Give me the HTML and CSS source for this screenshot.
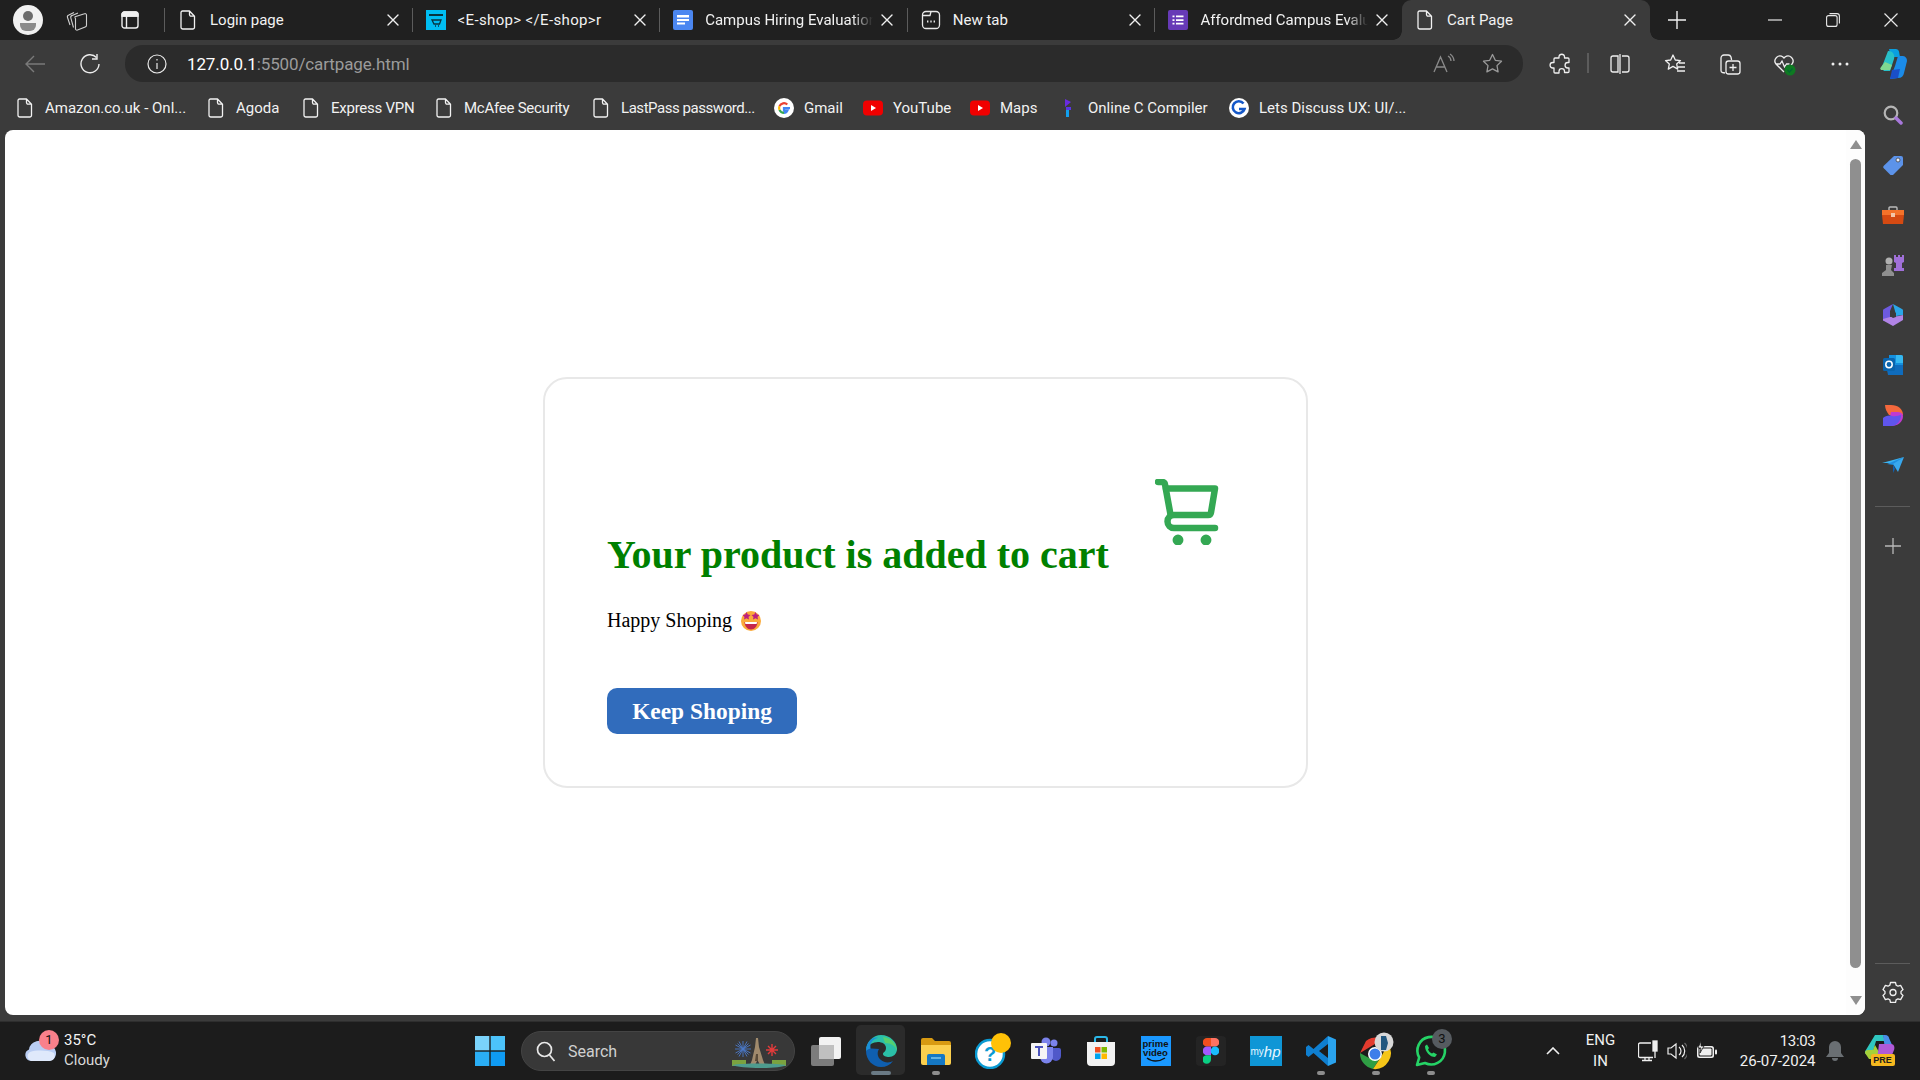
FILE: index.html
```html
<!DOCTYPE html>
<html lang="en">
<head>
<meta charset="utf-8">
<title>Cart Page</title>
<link rel="stylesheet" href="styles.css">
</head>
<body>
<svg class="defs" aria-hidden="true">
  <symbol id="file" viewBox="0 0 16 20"><path d="M2.5 1h7l5 5.2v11a1.8 1.8 0 0 1-1.8 1.8H2.8A1.8 1.8 0 0 1 1 17.2V2.5A1.5 1.5 0 0 1 2.5 1zM9.5 1v3.6a1.6 1.6 0 0 0 1.6 1.6h3.4" fill="none" stroke="#f2f2f2" stroke-width="1.3" stroke-linejoin="round"/></symbol>
  <symbol id="x" viewBox="0 0 14 14"><path d="M2 2l10 10M12 2L2 12" stroke="#f0f0f0" stroke-width="1.4" stroke-linecap="round"/></symbol>
  <symbol id="yt" viewBox="0 0 20 16"><rect width="20" height="15" y=".5" rx="4" fill="#f00000"/><path d="M8 5l5 3-5 3z" fill="#fff"/></symbol>
  <symbol id="g" viewBox="0 0 20 20"><circle cx="10" cy="10" r="10" fill="#fff"/><path d="M16 10.2H10v2.4h3.4a3.7 3.7 0 0 1-3.4 2.3" fill="none" stroke="#4285f4" stroke-width="2.2"/><path d="M10 14.9a4.9 4.9 0 0 1-4.5-3" fill="none" stroke="#34a853" stroke-width="2.2"/><path d="M5.5 11.9a5 5 0 0 1 0-3.8" fill="none" stroke="#fbbc05" stroke-width="2.2"/><path d="M5.5 8.1A4.9 4.9 0 0 1 13.3 6.500" fill="none" stroke="#ea4335" stroke-width="2.2"/></symbol>
</svg>

<header class="tabstrip">
  <div class="tabstart">
    <svg class="avatar" width="30" height="30" viewBox="0 0 30 30"><circle cx="15" cy="15" r="15" fill="#f1f1f1"/><circle cx="15" cy="11" r="5" fill="#6b6b6b"/><path d="M7 18h16v2a6 6 0 0 1-6 6h-4a6 6 0 0 1-6-6z" fill="#8a8a8a"/></svg>
    <svg class="ws" width="22" height="22" viewBox="0 0 22 22" fill="none" stroke="#cfcfcf" stroke-width="1.1" stroke-linejoin="round"><path d="M4 16L1.500 8.500a2 2 0 0 1 1.300-2.500L8 3.500M7.500 18.500L4.800 8.800a2 2 0 0 1 1.400-2.400L12 4"/><path d="M9 7.800L18.500 4.700a1.500 1.500 0 0 1 2 1.400V16.200a2 2 0 0 1-1.300 1.900l-7.700 3A1.500 1.500 0 0 1 9.500 19.700V9.500A2 2 0 0 1 9 7.800z"/></svg>
    <svg class="vt" width="18" height="18" viewBox="0 0 18 18" fill="none" stroke="#f0f0f0" stroke-width="1.4"><rect x="1" y="1" width="16" height="16" rx="2.500"/><path d="M1 5h16M5.500 5v12"/><path d="M1 3.500A2.500 2.500 0 0 1 3.500 1h11A2.500 2.500 0 0 1 17 3.500V5H1z" fill="#f0f0f0"/></svg>
  </div>

  <div class="tab">
    <span class="sep"></span>
    <svg class="ticon" width="16" height="20"><use href="#file"/></svg>
    <span class="ttitle ttitle-file">Login page</span>
    <svg class="tclose" width="14" height="14"><use href="#x"/></svg>
  </div>
  <div class="tab">
    <span class="sep"></span>
    <svg class="ticon ticon-wide" width="20" height="20" viewBox="0 0 20 20"><rect width="20" height="20" fill="#00bdf2"/><rect x="3" y="4" width="14" height="2" fill="#07343f"/><path d="M6 10h9l-1.500 4H8zM9 16h1M12 16h1" fill="none" stroke="#07343f" stroke-width="1.300"/></svg>
    <span class="ttitle ttitle-shop">&lt;E-shop&gt; &lt;/E-shop&gt;r</span>
    <svg class="tclose" width="14" height="14"><use href="#x"/></svg>
  </div>
  <div class="tab">
    <span class="sep"></span>
    <svg class="ticon ticon-wide" width="20" height="20" viewBox="0 0 20 20"><rect width="20" height="20" rx="2" fill="#4b87f1"/><path d="M4 5h12v2.500H4zM4 9h12v2H4zM4 12.500h8v2H4z" fill="#fff"/></svg>
    <span class="ttitle fade">Campus Hiring Evaluation</span>
    <svg class="tclose" width="14" height="14"><use href="#x"/></svg>
  </div>
  <div class="tab">
    <span class="sep"></span>
    <svg class="ticon ticon-wide" width="20" height="20" viewBox="0 0 20 20" fill="none" stroke="#e8e8e8" stroke-width="1.300"><rect x="1.500" y="1.500" width="17" height="17" rx="3.500"/><path d="M1.500 5.500h7.500l1-4"/><path d="M6 11.500h1.400M9.300 11.500h1.400M12.600 11.500H14" stroke-width="1.800"/></svg>
    <span class="ttitle">New tab</span>
    <svg class="tclose" width="14" height="14"><use href="#x"/></svg>
  </div>
  <div class="tab">
    <span class="sep"></span>
    <svg class="ticon ticon-wide" width="20" height="20" viewBox="0 0 20 20"><rect width="20" height="20" rx="2" fill="#673ab7"/><path d="M8 5.500h7.500v1.700H8zM8 9.200h7.500v1.700H8zM8 12.800h7.500v1.700H8z" fill="#fff"/><path d="M4.500 5.500h2v1.700h-2zM4.500 9.200h2v1.700h-2zM4.500 12.800h2v1.700h-2z" fill="#fff"/></svg>
    <span class="ttitle fade">Affordmed Campus Evalu</span>
    <svg class="tclose" width="14" height="14"><use href="#x"/></svg>
  </div>
  <div class="tab tab-active">
    <svg class="ticon ticon-active" width="16" height="20"><use href="#file"/></svg>
    <span class="ttitle">Cart Page</span>
    <svg class="tclose" width="14" height="14"><use href="#x"/></svg>
  </div>

  <div class="newtab"><svg width="18" height="18" viewBox="0 0 18 18"><path d="M9 0v18M0 9h18" stroke="#f0f0f0" stroke-width="1.400"/></svg></div>

  <div class="winctl">
    <div class="wbtn"><svg width="14" height="14" viewBox="0 0 14 14"><path d="M0 7h14" stroke="#e8e8e8" stroke-width="1.200"/></svg></div>
    <div class="wbtn"><svg width="14" height="14" viewBox="0 0 14 14" fill="none" stroke="#e8e8e8" stroke-width="1.100"><rect x=".6" y="2.600" width="10.500" height="10.800" rx="2"/><path d="M3.500.6h7.500a2.400 2.400 0 0 1 2.400 2.400v7.500"/></svg></div>
    <div class="wbtn"><svg width="14" height="14" viewBox="0 0 14 14"><path d="M.5.500l13 13M13.500.500l-13 13" stroke="#e8e8e8" stroke-width="1.200"/></svg></div>
  </div>
</header>

<nav class="toolbar">
  <div class="tbtn"><svg width="20" height="18" viewBox="0 0 20 18" fill="none" stroke="#7a7a7a" stroke-width="1.400"><path d="M20 9H1M9 1L1 9l8 8"/></svg></div>
  <div class="tbtn"><svg width="20" height="20" viewBox="0 0 20 20" fill="none" stroke="#ededed" stroke-width="1.400"><path d="M16.500 3.500A9 9 0 1 0 19 10"/><path d="M17 0v5h-5"/></svg></div>
  <div class="addr">
    <svg class="addr-info" width="20" height="20" viewBox="0 0 20 20" fill="none" stroke="#eaeaea" stroke-width="1.200"><circle cx="10" cy="10" r="9"/><path d="M10 9v6M10 5v1.600"/></svg>
    <span class="url"><span class="url-host">127.0.0.1</span>:5500/cartpage.html</span>
    <svg class="addr-read" width="22" height="22" viewBox="0 0 22 22" fill="none" stroke="#8a8a8a" stroke-width="1.300"><path d="M1 19L7.500 4 14 19M3.500 14h8M15 3a6 6 0 0 1 3 5M17 1a9 9 0 0 1 4 7"/></svg>
    <svg class="addr-star" width="21" height="21" viewBox="0 0 21 21" fill="none" stroke="#9a9a9a" stroke-width="1.300"><path d="M10.500 1.500l2.800 5.800 6.200.9-4.500 4.400 1.100 6.300-5.600-3-5.600 3 1.100-6.300L1.500 8.200l6.200-.9z" stroke-linejoin="round"/></svg>
  </div>
  <div class="tbtn tbtn-first"><svg width="22" height="22" viewBox="-2 0 22 22" fill="none" stroke="#efefef" stroke-width="1.300" stroke-linejoin="round"><path d="M8 3.500a2.800 2.800 0 0 1 5.500 0V5H17a1 1 0 0 1 1 1v3.500h-1.200a2.700 2.700 0 0 0 0 5.500H18v3.500a1 1 0 0 1-1 1h-3.500v-1.200a2.700 2.700 0 0 0-5.500 0V20H4a1 1 0 0 1-1-1v-4H1.800a2.700 2.700 0 0 1 0-5.500H3V6a1 1 0 0 1 1-1h4z"/></svg></div>
  <span class="tsep"></span>
  <div class="tbtn"><svg width="20" height="20" viewBox="0 0 20 20" fill="none" stroke="#efefef" stroke-width="1.300"><path d="M8 2H3a2 2 0 0 0-2 2v12a2 2 0 0 0 2 2h5zM12 2h5a2 2 0 0 1 2 2v12a2 2 0 0 1-2 2h-5M10 0v20"/></svg></div>
  <div class="tbtn"><svg width="22" height="22" viewBox="0 0 22 22" fill="none" stroke="#efefef" stroke-width="1.300" stroke-linejoin="round"><path d="M9 2l2.300 5 5.200.6-3.800 3.500 1 5-4.700-2.700-4.700 2.700 1-5-3.800-3.500L6.700 7zM15 10h6M14 14h7M13 18h8"/></svg></div>
  <div class="tbtn"><svg width="22" height="22" viewBox="0 0 22 22" fill="none" stroke="#efefef" stroke-width="1.300"><path d="M6 20l-2.500-.500a2 2 0 0 1-1.500-2V5a3 3 0 0 1 3-3h4a3 3 0 0 1 3 2l.6 3"/><rect x="7" y="8" width="14" height="13" rx="2.500"/><path d="M14 11v7M10.500 14.500h7"/></svg></div>
  <div class="tbtn"><svg width="24" height="24" viewBox="0 0 24 24"><path d="M11 20L3 12a5 5 0 0 1 7-7l1 1 1-1a5 5 0 0 1 7 7l-1 1M3 12h4l2-3 2.500 6 2-3h3" fill="none" stroke="#efefef" stroke-width="1.300"/><circle cx="17" cy="18" r="5.500" fill="#0e7a22"/><path d="M14.500 18l2 2 3-3.500" fill="none" stroke="#063" stroke-width="1.200"/></svg></div>
  <div class="tbtn"><svg width="18" height="4" viewBox="0 0 18 4" fill="#efefef"><circle cx="2" cy="2" r="1.500"/><circle cx="9" cy="2" r="1.500"/><circle cx="16" cy="2" r="1.500"/></svg></div>
  <div class="tbtn tbtn-cop"><svg width="30" height="32" viewBox="0 0 30 32"><path d="M11 1h7a3 3 0 0 1 3 2.500L22 9H13z" fill="#0a9fe0"/><path d="M10 3l-5 13a5 5 0 0 0 1 7h6l4-12c1-3 0-8-6-8z" fill="#28c0c8"/><path d="M3 22h9l2-5-7-3-4 5a2 2 0 0 0 0 3z" fill="#80d890"/><path d="M20 8h5a5 5 0 0 1 4 5l-3 12a6 6 0 0 1-6 5l-8 1 5-13z" fill="#1b8be8"/><path d="M14 22l8-1-2 9-8 1z" fill="#1a4fc8"/></svg></div>
</nav>

<div class="body">
  <div class="main">
    <div class="bookmarks">
      <div class="bm"><svg width="16" height="20"><use href="#file"/></svg><span>Amazon.co.uk - Onl...</span></div>
      <div class="bm"><svg width="16" height="20"><use href="#file"/></svg><span>Agoda</span></div>
      <div class="bm bm-snug"><svg width="16" height="20"><use href="#file"/></svg><span>Express VPN</span></div>
      <div class="bm bm-snug"><svg width="16" height="20"><use href="#file"/></svg><span>McAfee Security</span></div>
      <div class="bm bm-tight"><svg width="16" height="20"><use href="#file"/></svg><span>LastPass password...</span></div>
      <div class="bm bm-g"><svg width="20" height="20"><use href="#g"/></svg><span>Gmail</span></div>
      <div class="bm bm-g"><svg width="20" height="16"><use href="#yt"/></svg><span>YouTube</span></div>
      <div class="bm bm-g"><svg width="20" height="16"><use href="#yt"/></svg><span>Maps</span></div>
      <div class="bm bm-g"><svg width="20" height="20" viewBox="0 0 20 20"><path d="M7 1l6 3-6 5z" fill="#6a2be0"/><path d="M8 9h5v3H8z" fill="#5a35e8"/><path d="M8 12h3v7H8z" fill="#12a0ee"/></svg><span>Online C Compiler</span></div>
      <div class="bm bm-g"><svg width="20" height="20" viewBox="0 0 20 20"><circle cx="10" cy="10" r="10" fill="#fff"/><path d="M14.500 5.500A6 6 0 1 0 15.500 11H10" fill="none" stroke="#1558c8" stroke-width="2.600"/></svg><span>Lets Discuss UX: UI/...</span></div>
    </div>

    <main class="page">
      <div class="content">
        <section class="card">
          <div class="card-head">
            <h1 class="card-title">Your product is added to cart</h1>
            <svg class="cart" width="64" height="66" viewBox="0 0 64 66" fill="none" stroke="#34a853" stroke-width="6.500" stroke-linecap="round" stroke-linejoin="round"><path d="M3 3h4a3 3 0 0 1 3 2.500l5.500 30"/><path d="M11 9.500h49l-4 24a3 3 0 0 1-3 2.500H19a6.500 6.500 0 0 0 0 13h41"/><circle cx="23" cy="61" r="2.200" fill="#34a853"/><circle cx="51" cy="61" r="2.200" fill="#34a853"/></svg>
          </div>
          <p class="card-text">Happy Shoping <svg class="emoji" width="20" height="20" viewBox="0 0 20 20"><circle cx="10" cy="10" r="10" fill="#fbab3a"/><path d="M5.500 1l1.300 2.500 2.700.4-2 2 .5 2.700L5.500 7.300 3 8.600l.5-2.700-2-2 2.700-.4zM14.500 1l1.300 2.500 2.700.4-2 2 .5 2.700-2.500-1.300-2.500 1.300.5-2.700-2-2 2.700-.4z" fill="#bc1f7f"/><path d="M3.500 11h13c0 4-3 7.500-6.500 7.500S3.500 15 3.500 11z" fill="#c5264b"/><path d="M4 11h12l-.4 2H4.400z" fill="#fff"/></svg></p>
          <button class="keep" type="button">Keep Shoping</button>
        </section>
      </div>
      <div class="scrollbar">
        <span class="sb-up"></span>
        <span class="sb-thumb"></span>
        <span class="sb-down"></span>
      </div>
    </main>
  </div>

  <aside class="sidebar">
    <div class="sicon"><svg width="20" height="21" viewBox="0 0 20 21"><circle cx="8" cy="8" r="6.300" fill="none" stroke="#b5b5b5" stroke-width="2.200"/><path d="M13 13l5 5" stroke="#a878dc" stroke-width="3.500" stroke-linecap="round"/></svg></div>
    <div class="sicon"><svg width="20" height="20" viewBox="0 0 20 20"><path d="M11 1h7a2 2 0 0 1 2 2v7L10 20a1.800 1.800 0 0 1-2.500 0L.8 13.300a1.800 1.800 0 0 1 0-2.500z" fill="#5c93ea"/><circle cx="15" cy="5" r="2" fill="#e8eefc" stroke="#444" stroke-width=".800"/></svg></div>
    <div class="sicon"><svg width="22" height="18" viewBox="0 0 22 18"><path d="M7 4V2a1 1 0 0 1 1-1h6a1 1 0 0 1 1 1v2" fill="none" stroke="#bbb" stroke-width="1.400"/><path d="M0 4h22v5H0z" fill="#f4722a"/><path d="M0 9h22l-1 9H1z" fill="#d54a12"/><rect x="9" y="7" width="4" height="4" fill="#f3c6a8"/></svg></div>
    <div class="sicon"><svg width="22" height="22" viewBox="0 0 22 22"><path d="M12 1h2v2h2V1h2v2h2V1h2v7l-2 1v5h2v3H12v-3h2V9l-2-1z" fill="#a070d8"/><circle cx="7" cy="7" r="3.500" fill="#b0b0b0"/><path d="M4 11h6l-1 5 3 3v3H0v-3l4-3z" fill="#8f8f8f"/></svg></div>
    <div class="sicon"><svg width="20" height="22" viewBox="0 0 20 22"><path d="M10 0l9 5a2 2 0 0 1 1 2v4l-7 1-1-5z" fill="#2aa6e8"/><path d="M0 7a2 2 0 0 1 1-2l9-5-3 7v8l-7 2z" fill="#6d5ae0"/><path d="M0 15l7-2 9-1 4-1v5l-10 6-9-5a2 2 0 0 1-1-2z" fill="#b184e6"/><path d="M7 8l3-1 3 2v4l-3 1-3-2z" fill="#3b3b3b"/></svg></div>
    <div class="sicon"><svg width="20" height="20" viewBox="0 0 20 20"><path d="M6 0h12a2 2 0 0 1 2 2v16a2 2 0 0 1-2 2H6z" fill="#1490df"/><path d="M13 0h5a2 2 0 0 1 2 2v6h-7z" fill="#35b8f1"/><path d="M3 10h17v10H5z" fill="#0f6cbd"/><rect y="3" width="12" height="13" rx="1.500" fill="#0a64ad"/><circle cx="6" cy="9.500" r="3.200" fill="none" stroke="#fff" stroke-width="1.500"/></svg></div>
    <div class="sicon"><svg width="20" height="21" viewBox="0 0 20 21"><path d="M2 0h6c7 0 12 4 12 10H6C4 7 2 4 2 0z" fill="#f4683c"/><path d="M8 7h6c3 0 6 1 6 4 0 6-5 10-12 10H0c4-2 6-4 8-14z" fill="#c03ad0"/><path d="M0 21V13c2-2 6-3 9-2 4 1 7-1 9-1 0 6-4 11-10 11z" fill="#5f55ec"/></svg></div>
    <div class="sicon"><svg width="22" height="16" viewBox="0 0 22 16"><path d="M0 6L22 0 11 6z" fill="#3bb4f2"/><path d="M5 7L22 0 12 8z" fill="#1f8fe0"/><path d="M11 7L22 0l-6 15z" fill="#38a8ee"/><path d="M11 7v9l2-4z" fill="#0f5fb0"/></svg></div>
    <span class="sdiv sdiv-top"></span>
    <div class="sicon sicon-plus"><svg width="16" height="16" viewBox="0 0 16 16"><path d="M8 0v16M0 8h16" stroke="#b8b8b8" stroke-width="1.300"/></svg></div>
    <span class="sdiv sdiv-bottom"></span>
    <div class="sicon sicon-gear"><svg width="22" height="22" viewBox="0 0 22 22" fill="none" stroke="#efefef" stroke-width="1.300" stroke-linejoin="round"><path d="M8.500 1.500h5l.6 2.600 1.900 1.100 2.600-.8 2.400 4.200-2 1.800v2.200l2 1.800-2.400 4.200-2.600-.8-1.900 1.100-.6 2.600h-5l-.6-2.600L6 17.800l-2.600.8L1 14.400 3 12.600v-2.200L1 8.600l2.400-4.200 2.600.8 1.900-1.100z"/><circle cx="11" cy="11.500" r="3"/></svg></div>
  </aside>
</div>

<footer class="taskbar">
  <div class="weather">
    <div class="wicon">
      <svg width="32" height="24" viewBox="0 0 32 24"><path d="M7 23a6 6 0 0 1-2-11.500A10 10 0 0 1 23 7a7 7 0 0 1 2 16z" fill="#b9cdf3"/><path d="M7 23a5 5 0 0 1-1-9c6-2 18-2 24 1 2 4 0 8-5 8z" fill="#dfe9fb"/></svg>
      <span class="wbadge">1</span>
    </div>
    <div class="wtext"><span class="wtemp">35°C</span><span>Cloudy</span></div>
  </div>

  <div class="cell"><svg width="30" height="30" viewBox="0 0 30 30"><rect width="14.300" height="14.300" fill="#7ad3fb"/><rect x="15.700" width="14.300" height="14.300" fill="#4cc3fa"/><rect y="15.700" width="14.300" height="14.300" fill="#2aaef5"/><rect x="15.700" y="15.700" width="14.300" height="14.300" fill="#0f9bf3"/></svg></div>

  <div class="search">
    <svg width="20" height="21" viewBox="0 0 20 21" fill="none" stroke="#e8e8e8" stroke-width="1.700"><circle cx="8.500" cy="8.500" r="7"/><path d="M13.500 14l5 6"/></svg>
    <span class="search-label">Search</span>
    <svg class="search-art" width="54" height="32" viewBox="0 0 54 32"><path d="M11 3v16M3 11h16M5.500 5.500l11 11M16.500 5.500l-11 11M7 3.500l8 15M15 3.500l-8 15M3.500 7l15 8M18.500 7l-15 8" stroke="#4a78c8" stroke-width=".9"/><path d="M40 6v12M34 12h12M36 8l8 8M44 8l-8 8" stroke="#e23b3b" stroke-width="1.400"/><path d="M24 0h2l1 9 4 13 2 5h-5l-2-4h-1l-2 4h-5l2-5 3-13z" fill="#a08a6c"/><path d="M23 23h3v-7h-2z" fill="#5a4b38"/><path d="M0 22h14v6H0zM40 22h14v6H40z" fill="#7ba23f"/><path d="M0 27c10-2 44-2 54 0-4 4-46 4-54 0z" fill="#4e9c8e"/></svg>
  </div>

  <div class="cell"><svg width="30" height="30" viewBox="0 0 30 30"><rect x="8" y="1" width="22" height="22" rx="2" fill="#f2f2f2"/><rect y="9" width="23" height="21" rx="2" fill="#8d8d8d" opacity=".85"/><rect x="8" y="9" width="15" height="14" fill="#c0c0c0"/></svg></div>
  <div class="cell cell-active"><svg width="32" height="32" viewBox="0 0 32 32"><path d="M1 16C1 7 8 0 16 0c9 0 16 7 16 14 0 5-4 8-8 8-3 0-6-1-6-3 0-2 3-2 3-6 0-4-4-6-8-6S1 10 1 16z" fill="#2bc0a8"/><path d="M1 16C1 7 8 1 13 3 7 4 4 9 6 15z" fill="#1a8fd8"/><path d="M1 16c0 9 7 16 15 16 5 0 9-2 12-6-3 2-9 2-12-1-4-3-4-8-2-11-5 0-9-2-13 2z" fill="#0f5fb0"/><path d="M20 8c6 0 11 3 12 8 0-4-3-13-14-14z" fill="#55d070"/></svg><span class="ind ind-active"></span></div>
  <div class="cell"><svg width="30" height="28" viewBox="0 0 30 28"><path d="M0 3a2 2 0 0 1 2-2h9l3 3h14a2 2 0 0 1 2 2v3H0z" fill="#d89a12"/><path d="M0 8h30v18a2 2 0 0 1-2 2H2a2 2 0 0 1-2-2z" fill="#fbcf4e"/><path d="M6 19a2 2 0 0 1 2-2h14a2 2 0 0 1 2 2v9H6z" fill="#1578c4"/><path d="M10 21h10" stroke="#7cc6ef" stroke-width="1.500"/></svg><span class="ind"></span></div>
  <div class="cell cell-help"><svg width="36" height="36" viewBox="0 0 36 36"><circle cx="15" cy="21" r="14" fill="#fff" stroke="#0a9ad2" stroke-width="2.500"/><text x="15" y="28" class="help-mark">?</text><ellipse cx="26" cy="10" rx="10" ry="10" fill="#ffc107"/></svg></div>
  <div class="cell"><svg width="30" height="28" viewBox="0 0 30 28"><circle cx="23" cy="6" r="3.500" fill="#7b83eb"/><circle cx="15" cy="5" r="4.500" fill="#7b83eb"/><path d="M18 11h10a2 2 0 0 1 2 2v6a5 5 0 0 1-10 0z" fill="#5059c9"/><path d="M9 10h13v10a6.500 6.500 0 0 1-13 0z" fill="#7b83eb"/><rect y="6" width="16" height="16" rx="1" fill="#f5f5f5"/><path d="M4 10h8M8 10v9" stroke="#4b53bc" stroke-width="2"/></svg></div>
  <div class="cell"><svg width="30" height="30" viewBox="0 0 30 30"><path d="M9 6V3a2 2 0 0 1 2-2h8a2 2 0 0 1 2 2v3" fill="none" stroke="#2bb8e8" stroke-width="2"/><path d="M1 6h28v20a4 4 0 0 1-4 4H5a4 4 0 0 1-4-4z" fill="#f2f2f2"/><rect x="9" y="11" width="5.500" height="5.500" fill="#f25022"/><rect x="15.500" y="11" width="5.500" height="5.500" fill="#7fba00"/><rect x="9" y="17.500" width="5.500" height="5.500" fill="#00a4ef"/><rect x="15.500" y="17.500" width="5.500" height="5.500" fill="#ffb900"/></svg></div>
  <div class="cell"><div class="prime"><span>prime</span><span>video</span><svg width="20" height="6" viewBox="0 0 20 6"><path d="M1 1c5 4 12 4 18 0" fill="none" stroke="#111" stroke-width="1.400"/></svg></div></div>
  <div class="cell"><div class="figma"><svg width="16" height="26" viewBox="0 0 16 26"><path d="M4 0h4v8.600H4a4.300 4.300 0 0 1 0-8.600z" fill="#f24e1e"/><path d="M8 0h4a4.300 4.300 0 0 1 0 8.600H8z" fill="#ff7262"/><path d="M4 8.600h4v8.600H4a4.300 4.300 0 0 1 0-8.600z" fill="#a259ff"/><circle cx="12" cy="12.900" r="4.300" fill="#1abcfe"/><path d="M4 17.200h4v4.300a4.300 4.300 0 1 1-4-4.300z" fill="#0acf83"/></svg></div></div>
  <div class="cell"><div class="myhp"><span class="my">my</span><span class="hp">hp</span></div></div>
  <div class="cell"><svg width="30" height="30" viewBox="0 0 30 30"><path d="M22 0L7.500 13l-5-4L0 11v8l2.500 2 5-4L22 30v-8l-9-7 9-7z" fill="#0f7fd0"/><path d="M22 0l8 3.500v23L22 30z" fill="#2aa3ee"/></svg><span class="ind"></span></div>
  <div class="cell cell-chrome"><svg width="38" height="38" viewBox="0 0 38 38"><path d="M3 21L9 9a15 15 0 0 1 22 3H18z" fill="#e33b2e"/><path d="M3 21a16 16 0 0 0 13 16l7-11H12z" fill="#2f9e44"/><path d="M31 12a16 16 0 0 1-15 25l8-12z" fill="#f5c518"/><circle cx="18" cy="22" r="7" fill="#fff"/><circle cx="18" cy="22" r="5.500" fill="#3d7eea"/><circle cx="27" cy="10" r="9.500" fill="#d8d8d8"/><path d="M24 4h5l2 7-2 7h-5z" fill="#21577f"/></svg><span class="ind"></span></div>
  <div class="cell cell-wa"><svg width="34" height="34" viewBox="0 0 34 34"><path d="M3 31l2.200-7.500A13.800 13.800 0 1 1 11 29z" fill="none" stroke="#25d366" stroke-width="2.600" stroke-linejoin="round"/><path d="M11 12c0 6 5 11 10 11l2-2.500-3.500-2-1.500 1c-2-.8-3-2-4-4l1-1.500-2-3.500z" fill="#25d366"/></svg><span class="wa-badge">3</span><span class="ind"></span></div>

  <div class="tray">
    <svg class="chev" width="14" height="8" viewBox="0 0 14 8"><path d="M1 7l6-6 6 6" fill="none" stroke="#f0f0f0" stroke-width="1.600"/></svg>
    <div class="lang"><span>ENG</span><span>IN</span></div>
    <svg class="net" width="20" height="22" viewBox="0 0 20 22" fill="none" stroke="#efefef" stroke-width="1.300"><path d="M13 3H2a1.500 1.500 0 0 0-1.500 1.500V16A1.500 1.500 0 0 0 2 17.500h13M7 17.500v3M11 17.500v3M4 20.500h10"/><rect x="15" y="1" width="4" height="10" fill="#efefef"/><path d="M17 11v7"/></svg>
    <svg class="vol" width="20" height="18" viewBox="0 0 20 18" fill="none" stroke="#efefef" stroke-width="1.200"><path d="M1 6h3l5-4v14l-5-4H1zM12 5a5 5 0 0 1 0 8M15 3a8 8 0 0 1 0 12"/><path d="M17.500 1a11 11 0 0 1 0 16" stroke="#666"/></svg>
    <svg class="bat" width="22" height="20" viewBox="0 0 22 20"><rect x="1" y="5" width="17" height="12" rx="2.500" fill="#efefef"/><rect x="19" y="8.500" width="2" height="5" rx="1" fill="#efefef"/><rect x="2.500" y="6.500" width="14" height="9" rx="1.500" fill="#1c1c1c"/><rect x="3.500" y="7.500" width="12" height="7" rx="1" fill="#efefef"/><path d="M5 0L2 7h3l-1 5 4-7H5z" fill="#efefef" stroke="#1c1c1c" stroke-width=".800"/></svg>
    <div class="clock"><span class="clock-time">13:03</span><span>26-07-2024</span></div>
    <svg class="bell" width="18" height="20" viewBox="0 0 18 20" fill="#6a6f73"><path d="M9 0a6 6 0 0 1 6 6v6l3 4H0l3-4V6a6 6 0 0 1 6-6z"/><path d="M6 17h6a3 3 0 0 1-6 0z"/></svg>
    <div class="copilot">
      <svg width="30" height="26" viewBox="0 0 30 26"><path d="M10 0h8l2 6H11L7 20H3a3 3 0 0 1-3-3.500z" fill="#2fc7c0"/><path d="M0 18a3 3 0 0 1 3-3h5l2-5 4 7-2 7H4z" fill="#a5d038"/><path d="M18 0h2c3 0 4 2 4 3l4 9-8 2z" fill="#4a8ee8"/><path d="M14 9h12c3 0 4 3 3 6l-2 5a6 6 0 0 1-6 5H12z" fill="#b05ad8"/></svg>
      <span class="pre">PRE</span>
    </div>
  </div>
</footer>
</body>
</html>
```

FILE: styles.css
```css
* { box-sizing: border-box; }
html, body { margin: 0; height: 100%; }
body {
  width: 1920px;
  height: 1080px;
  overflow: hidden;
  background: #3b3b3b;
  color: #f2f2f2;
  font-family: Roboto, "Noto Sans", sans-serif;
  font-size: 15px;
  display: flex;
  flex-direction: column;
}
svg { display: block; flex: none; }
.defs { width: 0; height: 0; }

/* Tab strip */
.tabstrip { height: 40px; background: #202020; display: flex; align-items: stretch; flex: none; }
.tabstart { width: 164px; display: flex; align-items: center; padding-left: 13px; flex: none; }
.ws { margin-left: 23px; }
.vt { margin-left: 33px; }
.tab { width: 247.6px; display: flex; align-items: center; position: relative; flex: none; }
.sep { width: 1px; height: 24px; background: #5c5c5c; margin-right: 14px; flex: none; }
.ticon { margin-left: 1px; margin-right: 14px; }
.ticon-wide { margin-left: -1px; margin-right: 12px; }
.ttitle { width: 175px; white-space: nowrap; overflow: hidden; flex: none; }
.ttitle-file { width: 176px; }
.ttitle-shop { letter-spacing: 0.35px; }
.fade { -webkit-mask-image: linear-gradient(90deg, #000 84%, transparent 96%); mask-image: linear-gradient(90deg, #000 84%, transparent 96%); }
.tab-active { background: #3b3b3b; border-radius: 9px 9px 0 0; }
.tab-active::before, .tab-active::after {
  content: "";
  position: absolute;
  bottom: 0;
  width: 9px;
  height: 9px;
}
.tab-active::before { left: -9px; background: radial-gradient(circle at 0 0, #202020 8.5px, #3b3b3b 9px); }
.tab-active::after { right: -9px; background: radial-gradient(circle at 100% 0, #202020 8.5px, #3b3b3b 9px); }
.ticon-active { margin-left: 15px; margin-right: 14px; }
.tab-active .ttitle { width: 176px; }
.newtab { width: 44px; margin-left: 5px; display: flex; align-items: center; justify-content: center; }
.winctl { margin-left: auto; display: flex; }
.wbtn { width: 58px; display: flex; align-items: center; justify-content: center; }

/* Toolbar */
.toolbar { height: 42px; display: flex; align-items: flex-end; padding-left: 7px; flex: none; }
.tbtn { width: 55px; height: 37px; display: flex; align-items: center; justify-content: center; flex: none; }
.tbtn-first { margin-left: 9px; }
.tbtn-cop { width: 52px; }
.tsep { width: 2px; height: 20px; background: #5c5c5c; margin: 0 3px 9px 0; flex: none; }
.addr {
  width: 1398px;
  height: 37px;
  margin-left: 8px;
  background: #2b2b2b;
  border-radius: 18px;
  display: flex;
  align-items: center;
  padding-left: 22px;
  flex: none;
}
.url { margin-left: 20px; font-size: 17px; color: #9b9b9b; letter-spacing: -0.12px; }
.url-host { color: #fff; }
.addr-read { margin-left: auto; }
.addr-star { margin-left: 27px; margin-right: 20px; }

/* Body */
.body { flex: 1; display: flex; min-height: 0; }
.main { flex: 1; display: flex; flex-direction: column; min-width: 0; padding-bottom: 6px; }
.bookmarks {
  height: 48px;
  display: grid;
  grid-template-columns: 191px 95px 133px 157px 181px 89px 107px 88px 171px auto;
  justify-content: start;
  align-items: center;
  padding: 4px 0 0 17px;
  flex: none;
}
.bm { display: flex; align-items: center; gap: 12px; white-space: nowrap; font-size: 15px; }
.bm-g { gap: 10px; }
.bm-snug { letter-spacing: -0.25px; }
.bm-tight { letter-spacing: -0.45px; }

/* Page */
.page {
  flex: 1;
  margin-left: 5px;
  background: #fff;
  border-radius: 8px;
  display: flex;
  overflow: hidden;
  color: #000;
  font-family: "Liberation Serif", "Times New Roman", serif;
}
.content { flex: 1; display: flex; justify-content: center; align-items: flex-start; padding-top: 247px; }
.card {
  width: 765px;
  height: 411px;
  border: 2px solid #e8e8e8;
  border-radius: 24px;
  padding: 100px 62px 0;
  display: flex;
  flex-direction: column;
  align-items: flex-start;
}
.card-head { display: flex; align-items: flex-start; gap: 46.5px; }
.card-title { margin: 53px 0 0; font-size: 40px; line-height: 46px; font-weight: 700; color: #008000; white-space: nowrap; }
.cart { margin-top: 0; }
.card-text { margin: 31px 0 0; font-size: 20px; line-height: 23px; display: flex; align-items: center; gap: 9px; }
.keep {
  margin-top: 56px;
  width: 190px;
  height: 46px;
  border: 0;
  border-radius: 10px;
  background: #316cbc;
  color: #fff;
  font-family: inherit;
  font-size: 23.4px;
  font-weight: 700;
}
.scrollbar { width: 19px; background: #fdfdfd; display: flex; flex-direction: column; align-items: center; padding: 10px 0; flex: none; }
.sb-up { width: 0; height: 0; border-left: 6.5px solid transparent; border-right: 6.5px solid transparent; border-bottom: 9px solid #8f8f8f; }
.sb-thumb { width: 11px; flex: 1; background: #8f8f8f; border-radius: 6px; margin: 10px 0 28px; }
.sb-down { width: 0; height: 0; border-left: 6.5px solid transparent; border-right: 6.5px solid transparent; border-top: 9px solid #8f8f8f; }

/* Sidebar */
.sidebar { width: 55px; flex: none; display: flex; flex-direction: column; align-items: center; padding-top: 8px; }
.sicon { height: 50px; width: 100%; display: flex; align-items: center; justify-content: center; flex: none; }
.sdiv { width: 35px; height: 1px; background: #5c5c5c; flex: none; }
.sdiv-top { margin-top: 16px; }
.sicon-plus { margin-top: 14px; }
.sdiv-bottom { margin-top: auto; }
.sicon-gear { margin-top: 3px; margin-bottom: 4px; }

/* Taskbar */
.taskbar {
  height: 59px;
  flex: none;
  background: #1c1c1c;
  border-top: 1px solid #2e2e2e;
  display: flex;
  align-items: center;
}
.weather { width: 462px; display: flex; align-items: center; padding-left: 24px; flex: none; }
.wicon { position: relative; width: 32px; height: 24px; margin-top: -2px; }
.wbadge {
  position: absolute;
  left: 15px;
  top: -8px;
  width: 20px;
  height: 20px;
  border-radius: 50%;
  background: #f9808b;
  color: #111;
  font-size: 13px;
  line-height: 20px;
  text-align: center;
}
.wtext { display: flex; flex-direction: column; margin-left: 8px; font-size: 15px; line-height: 20px; color: #d8d8d8; margin-top: -3px; }
.wtemp { color: #f4f4f4; }
.cell { width: 55px; height: 58px; display: flex; align-items: center; justify-content: center; position: relative; flex: none; }
.cell-active::before {
  content: "";
  position: absolute;
  left: 3px;
  right: 3px;
  top: 3px;
  bottom: 5px;
  border-radius: 5px;
  background: #2b2b2b;
}
.cell-active svg { position: relative; }
.cell-help svg { margin-left: 4px; }
.ind { position: absolute; left: 50%; bottom: 5px; width: 8px; height: 4px; margin-left: -4px; border-radius: 2px; background: #8d8d8d; }
.ind-active { width: 20px; margin-left: -10px; background: #6a7a85; }
.search {
  width: 274px;
  height: 40px;
  margin: 0 3px 0 4px;
  border-radius: 20px;
  background: #383838;
  border: 1px solid #444;
  display: flex;
  align-items: center;
  padding-left: 14px;
  flex: none;
}
.search-label { margin-left: 12px; font-size: 16px; color: #d0d0d0; }
.search-art { margin-left: auto; margin-right: 8px; margin-top: 6px; }
.help-mark { font-family: "Liberation Sans", sans-serif; font-size: 20px; font-weight: 700; fill: #0a9ad2; text-anchor: middle; }
.prime {
  width: 30px;
  height: 30px;
  background: #1a98ff;
  color: #111;
  font-family: "Liberation Sans", sans-serif;
  font-size: 9.5px;
  font-weight: 700;
  line-height: 9px;
  display: flex;
  flex-direction: column;
  align-items: center;
  padding-top: 3px;
}
.figma { width: 30px; height: 30px; background: #242424; border-radius: 4px; display: flex; align-items: center; justify-content: center; }
.myhp { width: 32px; height: 30px; background: #0f96d6; color: #e8f6ff; font-family: "Liberation Sans", sans-serif; font-style: italic; display: flex; align-items: center; justify-content: center; }
.my { font-size: 10px; font-style: normal; }
.hp { font-size: 15px; }
.wa-badge {
  position: absolute;
  left: 29px;
  top: 7px;
  width: 20px;
  height: 20px;
  border-radius: 50%;
  background: #565b60;
  color: #111;
  font-size: 13px;
  line-height: 20px;
  text-align: center;
}
.tray { display: flex; align-items: center; flex: none; }
.chev { margin-left: 87.5px; margin-right: 8px; }
.lang { width: 40px; margin-left: 13px; display: flex; flex-direction: column; align-items: center; font-size: 15px; line-height: 21px; color: #f0f0f0; }
.net { margin-left: 17px; }
.vol { margin-left: 9px; }
.bat { margin-left: 9px; }
.clock { width: 90px; margin-left: 8px; display: flex; flex-direction: column; align-items: flex-end; font-size: 15px; line-height: 20px; color: #f0f0f0; }
.clock-time { letter-spacing: -0.3px; }
.bell { margin-left: 10px; }
.copilot { position: relative; width: 30px; height: 26px; margin-left: 21px; margin-top: -6px; }
.pre {
  position: absolute;
  left: 6px;
  top: 19px;
  width: 24px;
  height: 12px;
  border-radius: 2px;
  background: #f5b81f;
  color: #1c1c1c;
  font-family: "Liberation Sans", sans-serif;
  font-size: 9px;
  font-weight: 700;
  line-height: 12px;
  text-align: center;
}
```
